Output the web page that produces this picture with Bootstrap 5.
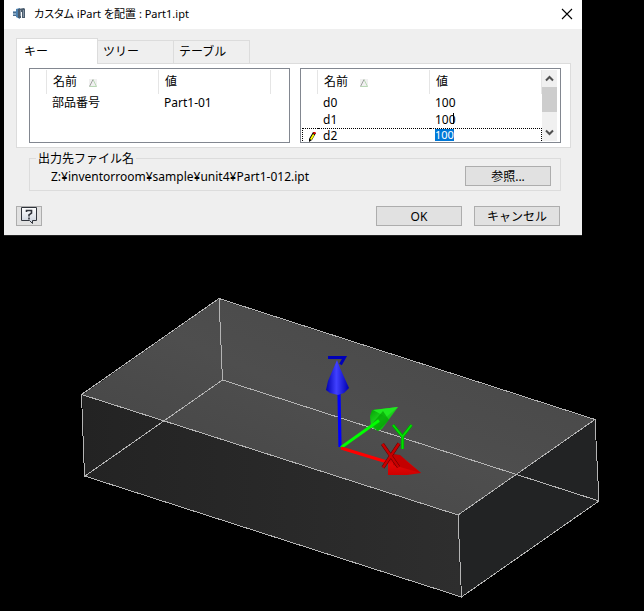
<!DOCTYPE html>
<html lang="ja">
<head>
<meta charset="utf-8">
<meta name="viewport" content="width=device-width, initial-scale=1">
<title>カスタム iPart を配置</title>
<link rel="stylesheet" href="https://cdn.jsdelivr.net/npm/bootstrap@5.3.0/dist/css/bootstrap.min.css">
<style>
body{background:#000;color:#000;font:12px/17px "Noto Sans","Noto Sans CJK JP",sans-serif}
.dialog-window{background:#efefef;margin:0 62px 0 4px;border-bottom:1px solid #222}
.titlebar{height:29px;padding:0 8px 2px;background:#fff}
.titlebar h1{font-size:11px;line-height:17px;font-feature-settings:"palt"}
.close-btn{width:14px;height:14px}
.dialog-content{padding:9px 11px 9px 12px}
.nav-tabs.key-tabs{border:0;align-items:flex-end}
.key-tabs .nav-link{border:1px solid #dcdcdc;border-bottom:0;border-radius:0;margin:0;color:#000;background:#efefef;text-align:left;width:76px;height:23px;padding:0 5px;line-height:22px}
.key-tabs .nav-item + .nav-item .nav-link{border-left:0}
.key-tabs .nav-link.active{width:82px;height:26px;padding:0 7px;background:#fff;border-color:#dcdcdc;margin-bottom:-1px;position:relative;z-index:1}
.key-panel{background:#fff;border:1px solid #dcdcdc;padding:4px 9px 4px 12px}
.grids{gap:10px}
.grid-box{flex:1 1 0;min-width:0;height:75px;border:1px solid #828790;background:#fff;padding:1px;overflow:hidden}
.param-grid{table-layout:fixed;border-collapse:separate;border-spacing:0}
.param-grid th,.param-grid td{padding:0 0 0 5px;white-space:nowrap;font-weight:400;height:17px;line-height:16px}
.param-grid thead th{height:24px;border-right:1px solid #e5e5e5;padding-left:6px;line-height:24px}
.param-grid thead th.tail{border:0}
.param-grid .mark-col{width:16px}
.param-grid .data-col{width:112px}
.param-grid .editing td{border-top:1px dotted #000;height:14px;line-height:14px;vertical-align:top}
.param-grid .editing td:first-child{border-left:1px dotted #000}
.param-grid .editing td:last-child{border-right:1px dotted #000}
.param-grid .editing label{display:block}
.sort-mark{margin-left:9px;background:#f0f0f0;vertical-align:-1px}
.value-edit{width:19px;height:12px;border:0;padding:0;background:#0078d7;color:#fff;font:11px/12px "Noto Sans",sans-serif;display:block;border-radius:0;outline:0}
.text-caret{position:absolute;left:23px;top:2px;width:1px;height:11px;background:#000}
.scroller{width:17px;background:#f0f0f0;border-right:2px solid #fff}
.scroller button{height:17px}
.scroll-thumb{height:25px;background:#cdcdcd}
.file-group{border:1px solid #dcdcdc;margin:2px 10px 0 13px;padding:0 9px 4px 21px}
.file-group legend{font-size:12px;line-height:17px;width:auto;padding:0 2px;margin:0 0 0 -15px;float:none}
.file-row{margin-top:-1px}
.btn.win-btn{width:86px;height:20px;border:1px solid #adadad;border-radius:0;background:#e1e1e1;color:#000;padding:0;font-size:12px;line-height:17px}
.btn.help-btn{width:26px}
.footer-row{margin:15px 11px 0 0;gap:12px}
.scene{display:block;width:100%;height:auto}
</style>
<script src="https://cdn.jsdelivr.net/npm/bootstrap@5.3.0/dist/js/bootstrap.bundle.min.js"></script>
</head>
<body>
<section class="dialog-window" role="dialog" aria-labelledby="dlgTitle">
  <header class="titlebar d-flex align-items-center">
    <svg width="14" height="14" viewBox="0 0 14 14" aria-hidden="true"><path d="M1 4h4v5H1z" fill="#8aa9c4"/><path d="M1 5h3v1H1zM1 8h3v1H1z" fill="#496b8c"/><path d="M4 2l4-1v11l-4-2z" fill="#4d82b0"/><path d="M6 2l6-1 1 1v9h-3V5H9v6H6z" fill="#4a5c6e"/><path d="M8 3h1v6H8zM11 3h1v7h-1z" fill="#8494a3"/></svg>
    <h1 id="dlgTitle" class="m-0 ms-2 fw-normal flex-grow-1">カスタム iPart を配置 : Part1.ipt</h1>
    <button type="button" class="close-btn btn p-0 border-0 d-flex align-items-center justify-content-center" aria-label="閉じる"><svg width="12" height="12" viewBox="0 0 12 12"><path d="M1 1l10 10M11 1L1 11" stroke="#000" stroke-width="1.1"/></svg></button>
  </header>
  <div class="dialog-content">
    <ul class="nav nav-tabs key-tabs" role="tablist">
      <li class="nav-item"><button type="button" class="nav-link active" role="tab" aria-selected="true">キー</button></li>
      <li class="nav-item"><button type="button" class="nav-link" role="tab">ツリー</button></li>
      <li class="nav-item"><button type="button" class="nav-link" role="tab">テーブル</button></li>
    </ul>
    <div class="key-panel">
      <div class="grids d-flex">
        <div class="grid-box">
          <table class="param-grid w-100">
            <thead><tr><th class="mark-col"></th><th class="data-col">名前 <svg class="sort-mark" width="8" height="8" viewBox="0 0 8 8"><path d="M.5 7.500L4 .5" stroke="#a0a0a0"/><path d="M4 .5l3.500 7H.5" fill="none" stroke="#b9d8b5"/></svg></th><th class="data-col">値</th><th class="tail"></th></tr></thead>
            <tbody><tr><td></td><td>部品番号</td><td>Part1-01</td><td></td></tr></tbody>
          </table>
        </div>
        <div class="grid-box d-flex justify-content-between">
          <div>
          <table class="param-grid">
            <thead><tr><th class="mark-col"></th><th class="data-col">名前 <svg class="sort-mark" width="8" height="8" viewBox="0 0 8 8"><path d="M.5 7.500L4 .5" stroke="#a0a0a0"/><path d="M4 .5l3.500 7H.5" fill="none" stroke="#b9d8b5"/></svg></th><th class="data-col">値</th></tr></thead>
            <tbody>
              <tr><td></td><td>d0</td><td>100</td></tr>
              <tr><td></td><td>d1</td><td class="position-relative">100<span class="text-caret"></span></td></tr>
              <tr class="editing"><td><svg class="d-block" width="9" height="13" viewBox="0 0 9 13"><path d="M1 10l4-7 3 1-4 7-3 2z" fill="#000"/><path d="M2 10l3-5 1.500 1-3 5z" fill="#ff0"/><path d="M5.500 3h2v2h-2z" fill="#e00"/></svg></td><td><label for="d2">d2</label></td><td><input id="d2" class="value-edit" value="100"></td></tr>
            </tbody>
          </table>
          </div>
          <div class="scroller d-flex flex-column flex-shrink-0">
            <button type="button" class="btn p-0 border-0 rounded-0 d-flex align-items-center justify-content-center" aria-label="上へ"><svg width="9" height="7" viewBox="0 0 9 7"><path d="M1 5.500L4.500 2 8 5.500" fill="none" stroke="#505050" stroke-width="2"/></svg></button>
            <div class="scroll-thumb"></div>
            <button type="button" class="btn p-0 border-0 rounded-0 d-flex align-items-center justify-content-center mt-auto" aria-label="下へ"><svg width="9" height="7" viewBox="0 0 9 7"><path d="M1 1.500L4.500 5 8 1.500" fill="none" stroke="#505050" stroke-width="2"/></svg></button>
          </div>
        </div>
      </div>
    </div>
    <fieldset class="file-group">
      <legend>出力先ファイル名</legend>
      <div class="file-row d-flex justify-content-between align-items-center">
        <span>Z:¥inventorroom¥sample¥unit4¥Part1-012.ipt</span>
        <button type="button" class="btn win-btn">参照...</button>
      </div>
    </fieldset>
    <div class="footer-row d-flex">
      <button type="button" class="btn win-btn help-btn me-auto d-flex justify-content-center" aria-label="ヘルプ"><svg width="18" height="17" viewBox="0 0 18 17"><defs><linearGradient id="hb" x2="0" y2="1"><stop stop-color="#fff"/><stop offset="1" stop-color="#c8d0dc"/></linearGradient></defs><path d="M1.500 .5h15v13h-4v3l-3-3h-8z" fill="url(#hb)" stroke="#30343c"/><path d="M6.500 5V3.500h5v2.500L9 8v1.500M9 10.500v2" fill="none" stroke="#30343c" stroke-width="1.600"/></svg></button>
      <button type="button" class="btn win-btn">OK</button>
      <button type="button" class="btn win-btn">キャンセル</button>
    </div>
  </div>
</section>
<svg class="scene" viewBox="0 236 644 375" role="img" aria-label="直方体と座標軸">
  <defs>
    <linearGradient id="topFace" x1="0" x2="1" y1="1" y2="0"><stop stop-color="#424242"/><stop offset=".5" stop-color="#4e4e4e"/><stop offset="1" stop-color="#464646"/></linearGradient>
    <linearGradient id="frontFace"><stop stop-color="#232323"/><stop offset="1" stop-color="#2e2e2e"/></linearGradient>
    <linearGradient id="zCone"><stop stop-color="#0000b0"/><stop offset=".45" stop-color="#4040ff"/><stop offset="1" stop-color="#0000b0"/></linearGradient>
    <linearGradient id="yCone" x2="1" y2="1"><stop stop-color="#009800"/><stop offset=".45" stop-color="#20d820"/><stop offset="1" stop-color="#009000"/></linearGradient>
    <linearGradient id="xCone" x2="0" y2="1"><stop stop-color="#b00000"/><stop offset=".5" stop-color="#e00808"/><stop offset="1" stop-color="#d00000"/></linearGradient>
  </defs>
  <path d="M219 299L595 420 458 515 82 395z" fill="url(#topFace)"/>
  <path d="M82 395L458 515l3 82L85 476z" fill="url(#frontFace)"/>
  <path d="M458 515l137-95 4 81-138 96z" fill="#222324"/>
  <g fill="none" stroke="#b4b4b4" shape-rendering="crispEdges">
    <path d="M219 298.500L595 419.500 458 515 81.500 394.500z"/>
    <path d="M81.500 394.500l3 81.500 377 121L599 501l-4-81M458 515l3.500 82M219 298.500l3.500 81.500L85 476M222.500 380L599 501"/>
  </g>
  <path d="M340 447l-1-54" stroke="#00f" stroke-width="3.200"/>
  <path d="M328 357.500h16.500l-4 7" fill="none" stroke="#0000b8" stroke-width="3"/>
  <path d="M337 360l-9 21-2 9 4 3 8 2 6-2 5-5-9-20z" fill="url(#zCone)"/>
  <path d="M370 416l2-6 26-3-16 22-4 2-7-4z" fill="url(#yCone)"/><path d="M373 410l25-3-12 10z" fill="#20e820"/><path d="M371 425l12-14 6 9-11 11z" fill="#009800" opacity=".6"/>
  <path d="M341 447.500l38-27" stroke="#0f0" stroke-width="2.800"/>
  <path d="M341 448l46 14" stroke="#f00" stroke-width="3.200"/>
  <path d="M388 475v-16l5-5 7 1 21 18-14 2z" fill="url(#xCone)"/><path d="M393 455l6 0 22 18-28-8z" fill="#c40000"/>
  <path d="M382.500 444l16 23M399 443.500l-16 24" stroke="#600" stroke-width="3.500"/>
  <path d="M382.500 444l16 23M399 443.500l-16 24" stroke="#c80000" stroke-width="2.300"/>
  <path d="M393 425l9.500 11.500L411.500 425M402.500 436v13" fill="none" stroke="#00a000" stroke-width="3.200"/><path d="M393 425l9.500 11.500L411.500 425M402.500 436v13" fill="none" stroke="#00e000" stroke-width="1.800"/>
</svg>
</body>
</html>
